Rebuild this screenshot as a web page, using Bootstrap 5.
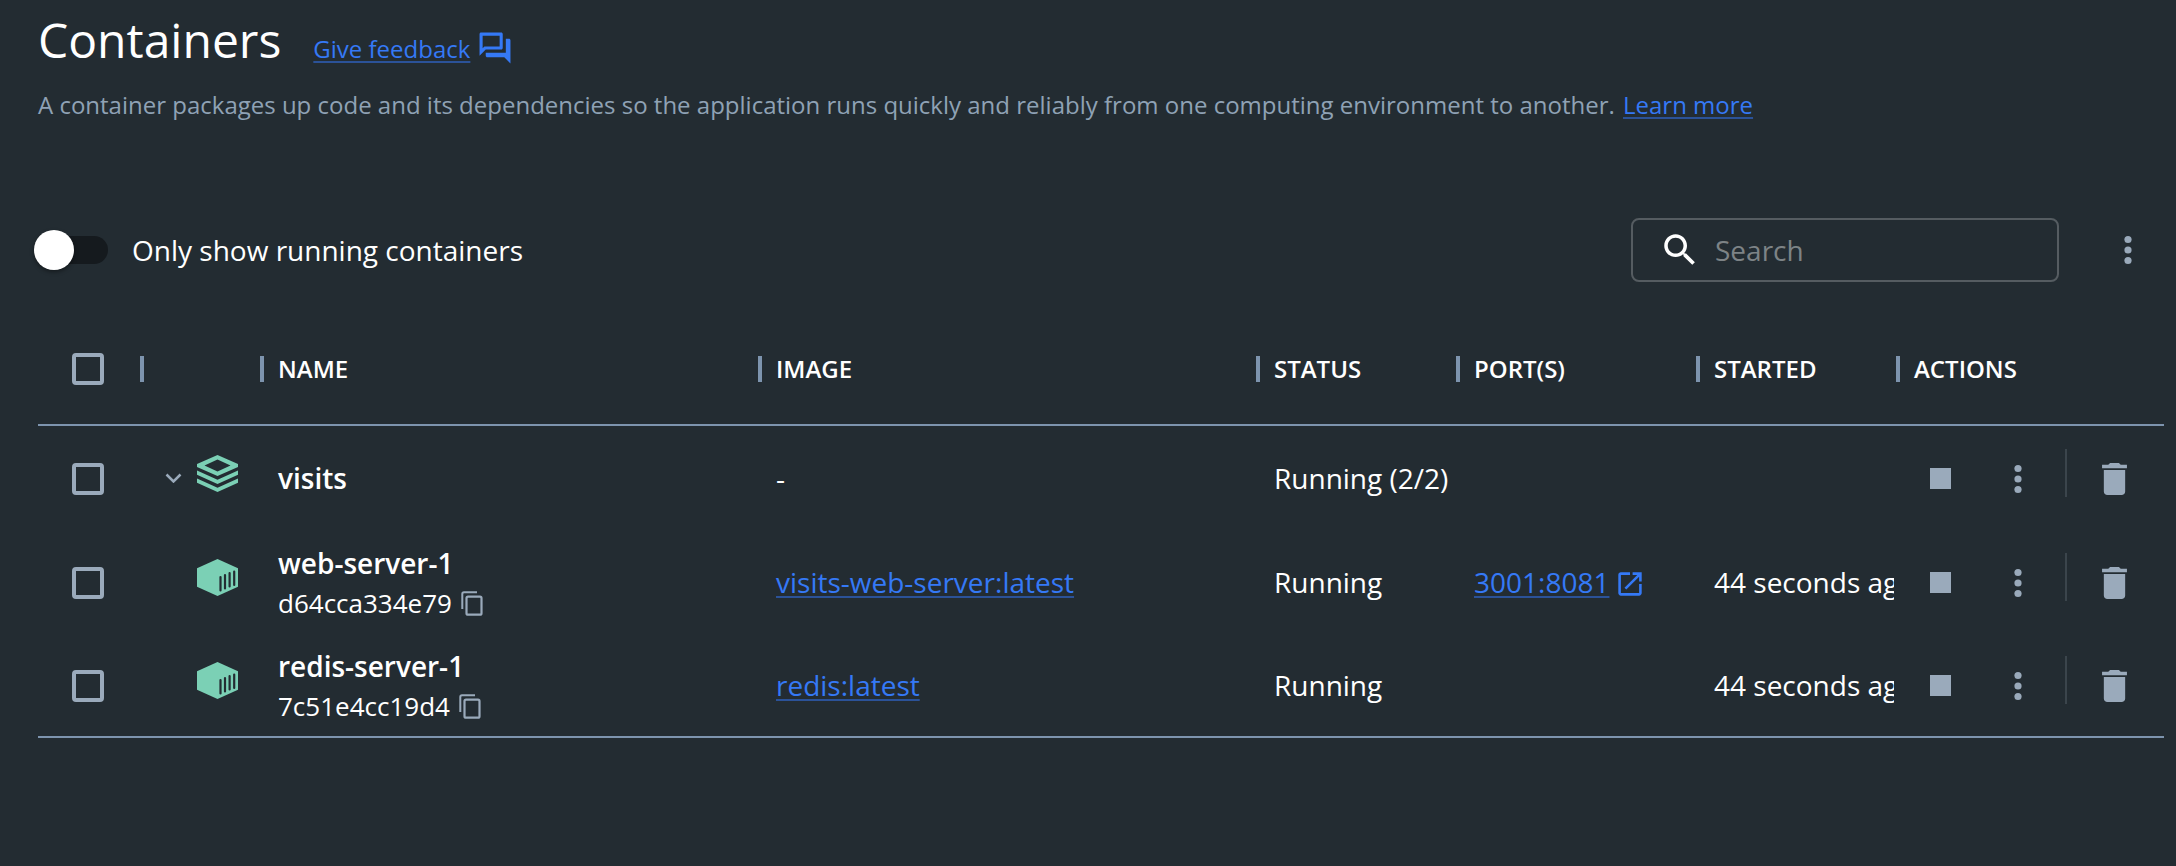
<!DOCTYPE html>
<html lang="en">
<head>
<meta charset="utf-8">
<meta name="viewport" content="width=device-width, initial-scale=1">
<title>Containers</title>
<link rel="stylesheet" href="https://cdn.jsdelivr.net/npm/bootstrap@5.3.0/dist/css/bootstrap.min.css">
<style>
  :root { --line: #7d94ae; --icon: #9aaabb; --link: #3579f6; }
  body { background: #232c32; color: #fff; font-family: "Open Sans", sans-serif; font-size: 28px; line-height: 40px; }
  .page { padding: 7px 12px 0 38px; }
  h1 { font-size: 48px; line-height: 66px; }
  a { color: var(--link); text-decoration-color: #2b5298; text-decoration-thickness: 2px; text-underline-offset: 3px; }
  a:hover { color: #6b9dfa; }
  svg { display: block; fill: currentColor; flex: none; }
  .text-md { font-size: 24px; line-height: 34px; }
  .intro { color: #8fa2b5; margin-top: 15px; }
  .intro a { margin-left: 2px; }
  .toolbar { margin-top: 96px; height: 64px; padding-right: 15px; }
  .switch { appearance: none; width: 68px; height: 28px; border-radius: 14px; background: #151a1e; margin: 0 24px 0 2px; display: flex; align-items: center; }
  .switch::before { content: ""; width: 40px; height: 40px; border-radius: 50%; background: #fff; margin-left: -6px; flex: none; box-shadow: 0 2px 4px rgba(0,0,0,.4); }
  .switch:checked::before { margin-left: 34px; }
  .search { width: 428px; height: 64px; border: 2px solid #555c61; border-radius: 8px; padding-left: 26px; gap: 14px; }
  .search input { background: none; border: 0; outline: 0; color: #fff; min-width: 0; padding: 0; }
  .search input::placeholder { color: #7d8386; opacity: 1; }
  .icon-btn { border: 0; background: none; padding: 0; color: var(--icon); width: 42px; height: 42px; display: flex; align-items: center; justify-content: center; }
  .grid { table-layout: fixed; width: 100%; margin-top: 30px; border-collapse: separate; border-spacing: 0; }
  .grid th, .grid td { padding: 0 0 0 20px; height: 104px; vertical-align: middle; overflow: hidden; white-space: nowrap; }
  .grid th { height: 114px; font-size: 24px; font-weight: 600; border-bottom: 2px solid var(--line); padding: 2px 0 0; }
  .grid th > div { display: flex; align-items: center; height: 26px; line-height: 26px; border-left: 4px solid var(--line); margin-left: 2px; padding-left: 14px; }
  .grid tr:last-child td { border-bottom: 2px solid var(--line); }
  .grid th.pick, .grid td.pick { padding-left: 34px; }
  .grid td.pick, .grid td.named, .grid td.tools { padding-top: 2px; }
  .grid td.tools { padding-right: 29px; }
  .pick input { appearance: none; display: block; width: 32px; height: 32px; border: 4px solid var(--icon); border-radius: 4px; margin: 0; }
  .pick input:checked { background: var(--link); }
  .c-pick { width: 100px; } .c-icon { width: 120px; } .c-status { width: 200px; } .c-port { width: 240px; } .c-start { width: 200px; } .c-act { width: 270px; }
  .grid td.kind { padding: 0 0 10px 59px; color: #7bd0b5; }
  .grid td.kind.open { padding-left: 24px; }
  .kind button { width: 23px; margin-right: 12px; }
  .cid { font-size: 26px; }
  .cid .icon-btn { width: 24px; height: 26px; }
  .stop { margin-left: 6px; }
  .rule { width: 2px; height: 48px; background: #3b454c; margin: 0 26px 12px 26px; }
</style>
</head>
<body>
<svg class="d-none" xmlns="http://www.w3.org/2000/svg">
  <symbol id="dots" viewBox="0 0 8 30"><circle cx="4" cy="4.500" r="3.600"/><circle cx="4" cy="15" r="3.600"/><circle cx="4" cy="25.500" r="3.600"/></symbol>
  <symbol id="trash" viewBox="5 3 14 18"><path d="M6 19c0 1.100.9 2 2 2h8c1.100 0 2-.9 2-2V7H6v12zM19 4h-3.500l-1-1h-5l-1 1H5v2h14V4z"/></symbol>
  <symbol id="copy" viewBox="0 0 22 25"><path d="M1.300 18V3Q1.300 1.200 3 1.200H16" fill="none" stroke="currentColor" stroke-width="2"/><rect x="5.500" y="5.700" width="15" height="18" rx="1.500" fill="none" stroke="currentColor" stroke-width="2.200"/></symbol>
  <symbol id="box" viewBox="0 0 41 37"><path d="M20.500 0 41 9.300V27.700L20.500 37 0 27.700V9.300z"/><path d="M23.500 18v13.500M28 16v13.500M32.600 14v13.500M37.200 12.500V26" stroke="#232c32" stroke-width="2.200" stroke-linecap="round"/></symbol>
</svg>
<main class="page">
  <header class="d-flex align-items-baseline">
    <h1 class="fw-normal mb-0">Containers</h1>
    <a href="#" class="text-md ms-4 ps-2">Give feedback</a>
    <svg class="ms-2 mt-3 align-self-center" width="34" height="34" viewBox="1 1 22 22" color="#3579f6"><path d="M15 4v7H5.170L4 12.170V4h11m1-2H3c-.55 0-1 .45-1 1v14l4-4h10c.55 0 1-.45 1-1V3c0-.55-.45-1-1-1zm5 4h-2v9H6v2c0 .55.45 1 1 1h11l4 4V7c0-.55-.45-1-1-1z"/></svg>
  </header>
  <p class="intro text-md mb-0">A container packages up code and its dependencies so the application runs quickly and reliably from one computing environment to another. <a href="#">Learn more</a></p>

  <div class="toolbar d-flex align-items-center">
    <input class="switch" type="checkbox" role="switch" id="running"><label for="running">Only show running containers</label>
    <div class="search d-flex align-items-center ms-auto me-5">
      <svg width="42" height="42" viewBox="0 0 24 24"><path d="M15.500 14h-.79l-.28-.27C15.410 12.590 16 11.110 16 9.500 16 5.910 13.090 3 9.500 3S3 5.910 3 9.500 5.910 16 9.500 16c1.610 0 3.090-.59 4.230-1.570l.27.28v.79l5 4.990L20.490 19l-4.990-5zm-6 0C7.010 14 5 11.990 5 9.500S7.010 5 9.500 5 14 7.010 14 9.500 11.990 14 9.500 14z"/></svg>
      <input type="text" class="flex-grow-1" placeholder="Search" aria-label="Search">
    </div>
    <button class="icon-btn" aria-label="Table options"><svg width="8" height="30"><use href="#dots"/></svg></button>
  </div>

  <table class="grid">
    <colgroup><col class="c-pick"><col class="c-icon"><col><col><col class="c-status"><col class="c-port"><col class="c-start"><col class="c-act"></colgroup>
    <thead>
      <tr>
        <th class="pick"><input type="checkbox" aria-label="Select all"></th>
        <th><div></div></th><th><div>NAME</div></th><th><div>IMAGE</div></th><th><div>STATUS</div></th><th><div>PORT(S)</div></th><th><div>STARTED</div></th><th><div>ACTIONS</div></th>
      </tr>
    </thead>
    <tbody>
      <tr>
        <td class="pick"><input type="checkbox" aria-label="Select visits"></td>
        <td class="kind open"><div class="d-flex align-items-center">
          <button class="icon-btn pt-2" aria-label="Collapse visits"><svg width="17" height="11" viewBox="0 0 17 11"><path d="M1.500 2.500 8.500 9.500 15.500 2.500" fill="none" stroke="currentColor" stroke-width="2.500"/></svg></button>
          <svg width="41" height="37" viewBox="0 0 41 37"><path fill-rule="evenodd" d="M20.500 0 41 9V12L20.500 21 0 12V9zM20.500 4.500 7.500 10.500 20.500 16.500 33.500 10.500z"/><path d="M0 15.500 20.500 24.700 41 15.500V19.700L20.500 29 0 19.700zM0 23.500 20.500 32.700 41 23.500V27.700L20.500 37 0 27.700z"/></svg>
        </div></td>
        <td class="fw-semibold">visits</td>
        <td>-</td><td>Running (2/2)</td><td></td><td></td>
        <td class="tools"><div class="d-flex align-items-center">
          <button class="icon-btn stop" aria-label="Stop"><svg width="22" height="22"><rect width="21" height="21"/></svg></button>
          <button class="icon-btn ms-auto" aria-label="More"><svg width="8" height="30"><use href="#dots"/></svg></button>
          <span class="rule"></span>
          <button class="icon-btn" aria-label="Delete"><svg width="25" height="32"><use href="#trash"/></svg></button>
        </div></td>
      </tr>
      <tr>
        <td class="pick"><input type="checkbox" aria-label="Select web-server-1"></td>
        <td class="kind"><svg width="41" height="37"><use href="#box"/></svg></td>
        <td class="named"><div class="fw-semibold">web-server-1</div><div class="cid d-flex align-items-center gap-2">d64cca334e79 <button class="icon-btn" aria-label="Copy id"><svg width="22" height="25"><use href="#copy"/></svg></button></div></td>
        <td><a href="#">visits-web-server:latest</a></td><td>Running</td>
        <td><div class="d-flex align-items-center gap-2"><a href="#">3001:8081</a><svg class="mt-1" width="26" height="26" viewBox="2 2 20 20" color="#3579f6"><path d="M19 19H5V5h7V3H5c-1.110 0-2 .9-2 2v14c0 1.100.89 2 2 2h14c1.100 0 2-.9 2-2v-7h-2v7zM14 3v2h3.590l-9.830 9.830 1.410 1.410L19 6.410V10h2V3h-7z"/></svg></div></td>
        <td>44 seconds ago</td>
        <td class="tools"><div class="d-flex align-items-center">
          <button class="icon-btn stop" aria-label="Stop"><svg width="22" height="22"><rect width="21" height="21"/></svg></button>
          <button class="icon-btn ms-auto" aria-label="More"><svg width="8" height="30"><use href="#dots"/></svg></button>
          <span class="rule"></span>
          <button class="icon-btn" aria-label="Delete"><svg width="25" height="32"><use href="#trash"/></svg></button>
        </div></td>
      </tr>
      <tr>
        <td class="pick"><input type="checkbox" aria-label="Select redis-server-1"></td>
        <td class="kind"><svg width="41" height="37"><use href="#box"/></svg></td>
        <td class="named"><div class="fw-semibold">redis-server-1</div><div class="cid d-flex align-items-center gap-2">7c51e4cc19d4 <button class="icon-btn" aria-label="Copy id"><svg width="22" height="25"><use href="#copy"/></svg></button></div></td>
        <td><a href="#">redis:latest</a></td><td>Running</td><td></td>
        <td>44 seconds ago</td>
        <td class="tools"><div class="d-flex align-items-center">
          <button class="icon-btn stop" aria-label="Stop"><svg width="22" height="22"><rect width="21" height="21"/></svg></button>
          <button class="icon-btn ms-auto" aria-label="More"><svg width="8" height="30"><use href="#dots"/></svg></button>
          <span class="rule"></span>
          <button class="icon-btn" aria-label="Delete"><svg width="25" height="32"><use href="#trash"/></svg></button>
        </div></td>
      </tr>
    </tbody>
  </table>
</main>
<script src="https://cdn.jsdelivr.net/npm/bootstrap@5.3.0/dist/js/bootstrap.bundle.min.js"></script>
</body>
</html>
